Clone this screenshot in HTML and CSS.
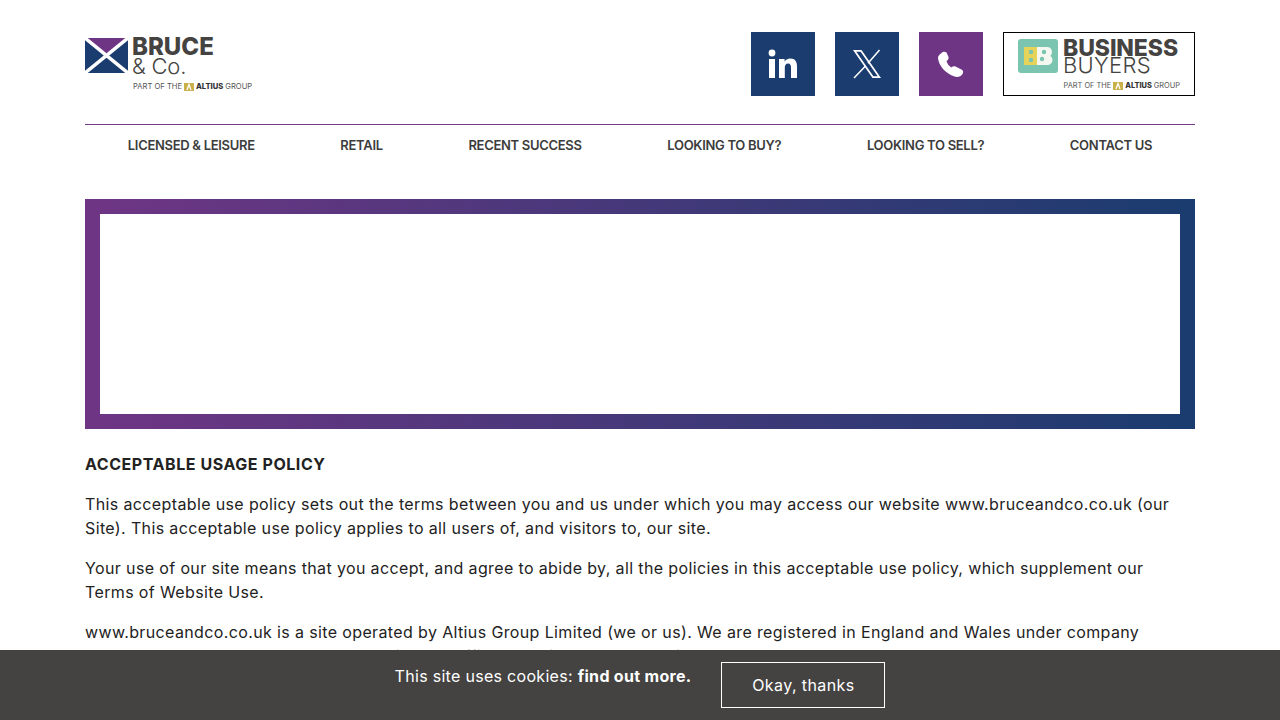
FILE: index.html
```html
<!DOCTYPE html>
<html lang="en">
<head>
<meta charset="utf-8">
<title>Acceptable Usage Policy</title>
<link rel="stylesheet" href="styles.css">
</head>
<body>
<div class="page">
  <header class="header">
    <a class="logo">
      <div class="logo-main">
        <svg class="saltire" viewBox="0 0 43 35" width="43" height="35">
          <rect width="43" height="35" fill="#1a3c6e"/>
          <polygon points="0,0 43,0 21.5,17.5" fill="#6f3585"/>
          <path d="M0 0 43 35M43 0 0 35" stroke="#fff" stroke-width="3.5"/>
        </svg>
        <div class="logo-words">
          <div class="logo-bruce">BRUCE</div>
          <div class="logo-co">&amp; Co.</div>
        </div>
      </div>
      <div class="altius logo-altius">PART OF THE <svg class="altius-mark" viewBox="0 0 10 8" width="10" height="8"><rect width="10" height="8" fill="#c9b04a"/><path d="M3 7 5 1.500 7 7" fill="none" stroke="#fff" stroke-width="1.300"/></svg> <b>ALTIUS</b> GROUP</div>
    </a>
    <div class="header-actions">
      <a class="tile tile-navy">
        <svg viewBox="0 0 30 30" width="30" height="30"><rect x="1" y="10" width="6" height="19" fill="#fff"/><circle cx="4" cy="4" r="3.400" fill="#fff"/><path d="M11 10h5.600v2.700c1-1.800 3-3.100 5.600-3.100 5.200 0 6.800 3.300 6.800 8V29h-6V18.800c0-2.500-.7-4.200-2.900-4.200-2.300 0-3.300 1.800-3.300 4.200V29H11z" fill="#fff"/></svg>
      </a>
      <a class="tile tile-navy">
        <svg viewBox="0 0 30 30" width="30" height="30"><path d="M1 1h8.500L29 29h-8.500zM4.300 2.700 21.400 27.300h4.300L8.600 2.700z" fill="#fff" fill-rule="evenodd"/><path d="M27.500 1 16 14.300M13.500 17 2 29" stroke="#fff" stroke-width="1.500" fill="none"/></svg>
      </a>
      <a class="tile tile-purple">
        <svg viewBox="0 0 28 30" width="28" height="30"><path d="M4 4.500C5.500 2.500 8 2.200 9.500 3.500L11.500 8C12 9.500 11 11 9.500 12C10 14.500 12 17 14.500 18.500C15.500 17.300 17 17 18.500 17.500L24.500 20.500C26.500 21.500 26.500 23.500 25.500 25C24 27.500 20.500 28.500 17.500 27.500C9 25 1.500 16.500 1 9C1 7 2.500 5.500 4 4.500z" fill="#fff"/></svg>
      </a>
      <a class="bb">
        <svg class="bb-mark" viewBox="0 0 40 34" width="40" height="34">
          <rect width="40" height="34" rx="3" fill="#7bc4b0"/>
          <path d="M6 8H19V26H6z" fill="#e6d45a"/>
          <path d="M19 8H29C33 8 34 11 34 13C34 15 33 16.500 32 17C33.500 17.500 34.500 19 34.500 21C34.500 24 32 26 29 26H19z" fill="#f4f8f0"/>
          <circle cx="13" cy="13" r="2.200" fill="#7bc4b0"/>
          <circle cx="13" cy="21" r="2.200" fill="#7bc4b0"/>
          <circle cx="26" cy="13" r="2.200" fill="#7bc4b0"/>
          <circle cx="24" cy="20" r="2.200" fill="#7bc4b0"/>
        </svg>
        <div class="bb-words">
          <div class="bb-business">BUSINESS</div>
          <div class="bb-buyers">BUYERS</div>
        </div>
        <div class="altius bb-altius">PART OF THE <svg class="altius-mark" viewBox="0 0 10 8" width="10" height="8"><rect width="10" height="8" fill="#c9b04a"/><path d="M3 7 5 1.500 7 7" fill="none" stroke="#fff" stroke-width="1.300"/></svg> <b>ALTIUS</b> GROUP</div>
      </a>
    </div>
  </header>
  <nav class="nav">
    <a>LICENSED &amp; LEISURE</a>
    <a>RETAIL</a>
    <a>RECENT SUCCESS</a>
    <a>LOOKING TO BUY?</a>
    <a>LOOKING TO SELL?</a>
    <a>CONTACT US</a>
  </nav>
  <div class="hero"><div class="hero-inner"></div></div>
  <main class="content">
    <p><strong>ACCEPTABLE USAGE POLICY</strong></p>
    <p>This acceptable use policy sets out the terms between you and us under which you may access our website www.bruceandco.co.uk (our Site). This acceptable use policy applies to all users of, and visitors to, our site.</p>
    <p>Your use of our site means that you accept, and agree to abide by, all the policies in this acceptable use policy, which supplement our Terms of Website Use.</p>
    <p>www.bruceandco.co.uk is a site operated by Altius Group Limited (we or us). We are registered in England and Wales under company number 06815082 and we have our registered office at 8 Lindsay Road, Edinburgh.</p>
  </main>
</div>
<div class="cookie">
  <span class="cookie-text">This site uses cookies: <b>find out more.</b></span>
  <button class="cookie-btn">Okay, thanks</button>
</div>
</body>
</html>
```
FILE: styles.css
```css
* { box-sizing: border-box; }
html, body { margin: 0; padding: 0; background: #fff; }
body { font-family: Inter, "Open Sans", sans-serif; color: #222; height: 720px; overflow: hidden; }
.page { padding: 32px 85px 0; }
.header { display: flex; justify-content: space-between; align-items: flex-start; height: 93px; border-bottom: 1px solid #743a8a; }
.logo { display: block; padding-top: 5px; color: #444341; }
.logo-main { display: flex; align-items: flex-start; gap: 4px; height: 45px; }
.saltire { display: block; margin-top: 1px; }
.logo-words { line-height: 1; }
.logo-bruce { font-size: 24px; font-weight: 800; letter-spacing: 0; line-height: 20px; }
.logo-co { font-size: 22px; font-weight: 300; letter-spacing: -.2px; line-height: 19px; }
.altius { font-size: 7.5px; color: #555; white-space: nowrap; display: flex; align-items: center; gap: 2px; }
.altius b { font-weight: 800; color: #333; }
.altius-mark { display: block; }
.logo-altius { margin-left: 48px; font-size: 7.6px; }
.header-actions { display: flex; gap: 20px; }
.tile { width: 64px; height: 64px; display: flex; align-items: center; justify-content: center; }
.tile-navy { background: #1a3c6e; }
.tile-purple { background: #6f3585; }
.bb { width: 192px; height: 64px; border: 1px solid #000; display: grid; grid-template-columns: 40px 1fr; grid-template-rows: 37px auto; column-gap: 5px; padding: 6px 14px 0; color: #444341; }
.bb-mark { display: block; }
.bb-words { line-height: 1; }
.bb-business { font-size: 23px; font-weight: 800; letter-spacing: -.1px; line-height: 18px; }
.bb-buyers { font-size: 22px; font-weight: 300; letter-spacing: .3px; line-height: 17px; }
.bb-altius { grid-column: 1 / 3; justify-content: flex-end; font-size: 7.4px; }
.nav { display: flex; justify-content: space-around; height: 74px; padding-top: 12px; font-size: 13px; font-weight: 600; color: #3c3c3c; line-height: 16px; letter-spacing: -.3px; }
.hero { height: 230px; padding: 15px; background: linear-gradient(90deg, #6f3585, #1a3c6e); }
.hero-inner { height: 200px; background: #fff; }
.content { padding-top: 23px; font-size: 16px; line-height: 24px; color: #222; letter-spacing: .37px; }
.content p { margin: 0 0 16px; }
.content strong { font-weight: 700; letter-spacing: .55px; }
.cookie { position: fixed; left: 0; right: 0; bottom: 0; height: 70px; background: #444341; color: #fff; display: flex; justify-content: center; align-items: flex-start; gap: 30px; padding-top: 12px; font-size: 16px; letter-spacing: .3px; }
.cookie-text { line-height: 28px; }
.cookie-btn { width: 164px; height: 46px; background: transparent; border: 1px solid #fff; color: #fff; font: inherit; letter-spacing: .4px; }
```
